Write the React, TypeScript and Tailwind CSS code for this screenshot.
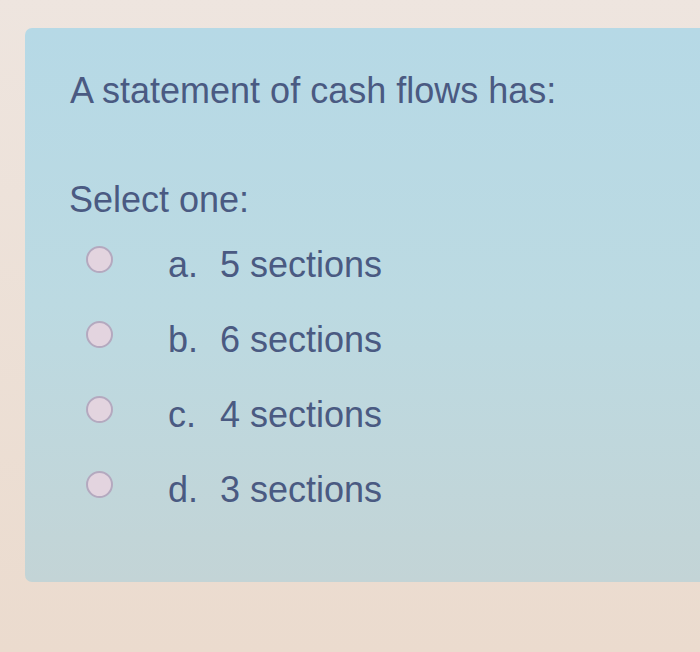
const options = [
  { letter: "a.", text: "5 sections" },
  { letter: "b.", text: "6 sections" },
  { letter: "c.", text: "4 sections" },
  { letter: "d.", text: "3 sections" },
];

export default function App() {
  return (
    <div
      className="w-[700px] h-[652px] overflow-hidden bg-gradient-to-b from-[#eee5df] to-[#ebdbce] pt-[28px] pl-[25px]"
      style={{ fontFamily: '"Liberation Sans", Arial, sans-serif' }}
    >
      <div className="h-[554px] rounded-l-[7px] bg-gradient-to-b from-[#b6d9e6] via-[#bcdae2] to-[#c3d4d6] pl-[44px] pt-[43px] text-[#4a5a82] text-[36px] leading-[40px]">
        <p className="ml-px">A statement of cash flows has:</p>
        <p className="mt-[69px]">Select one:</p>
        <div className="mt-[25px] flex flex-col">
          {options.map((o) => (
            <div key={o.letter} className="flex items-start h-[75px]">
              <span className="ml-[17px] mt-px h-[27px] w-[27px] shrink-0 rounded-full border-2 border-[#b4a9bf] bg-[#e3d4df]" />
              <span className="ml-[55px] w-[52px]">{o.letter}</span>
              <span>{o.text}</span>
            </div>
          ))}
        </div>
      </div>
    </div>
  );
}
